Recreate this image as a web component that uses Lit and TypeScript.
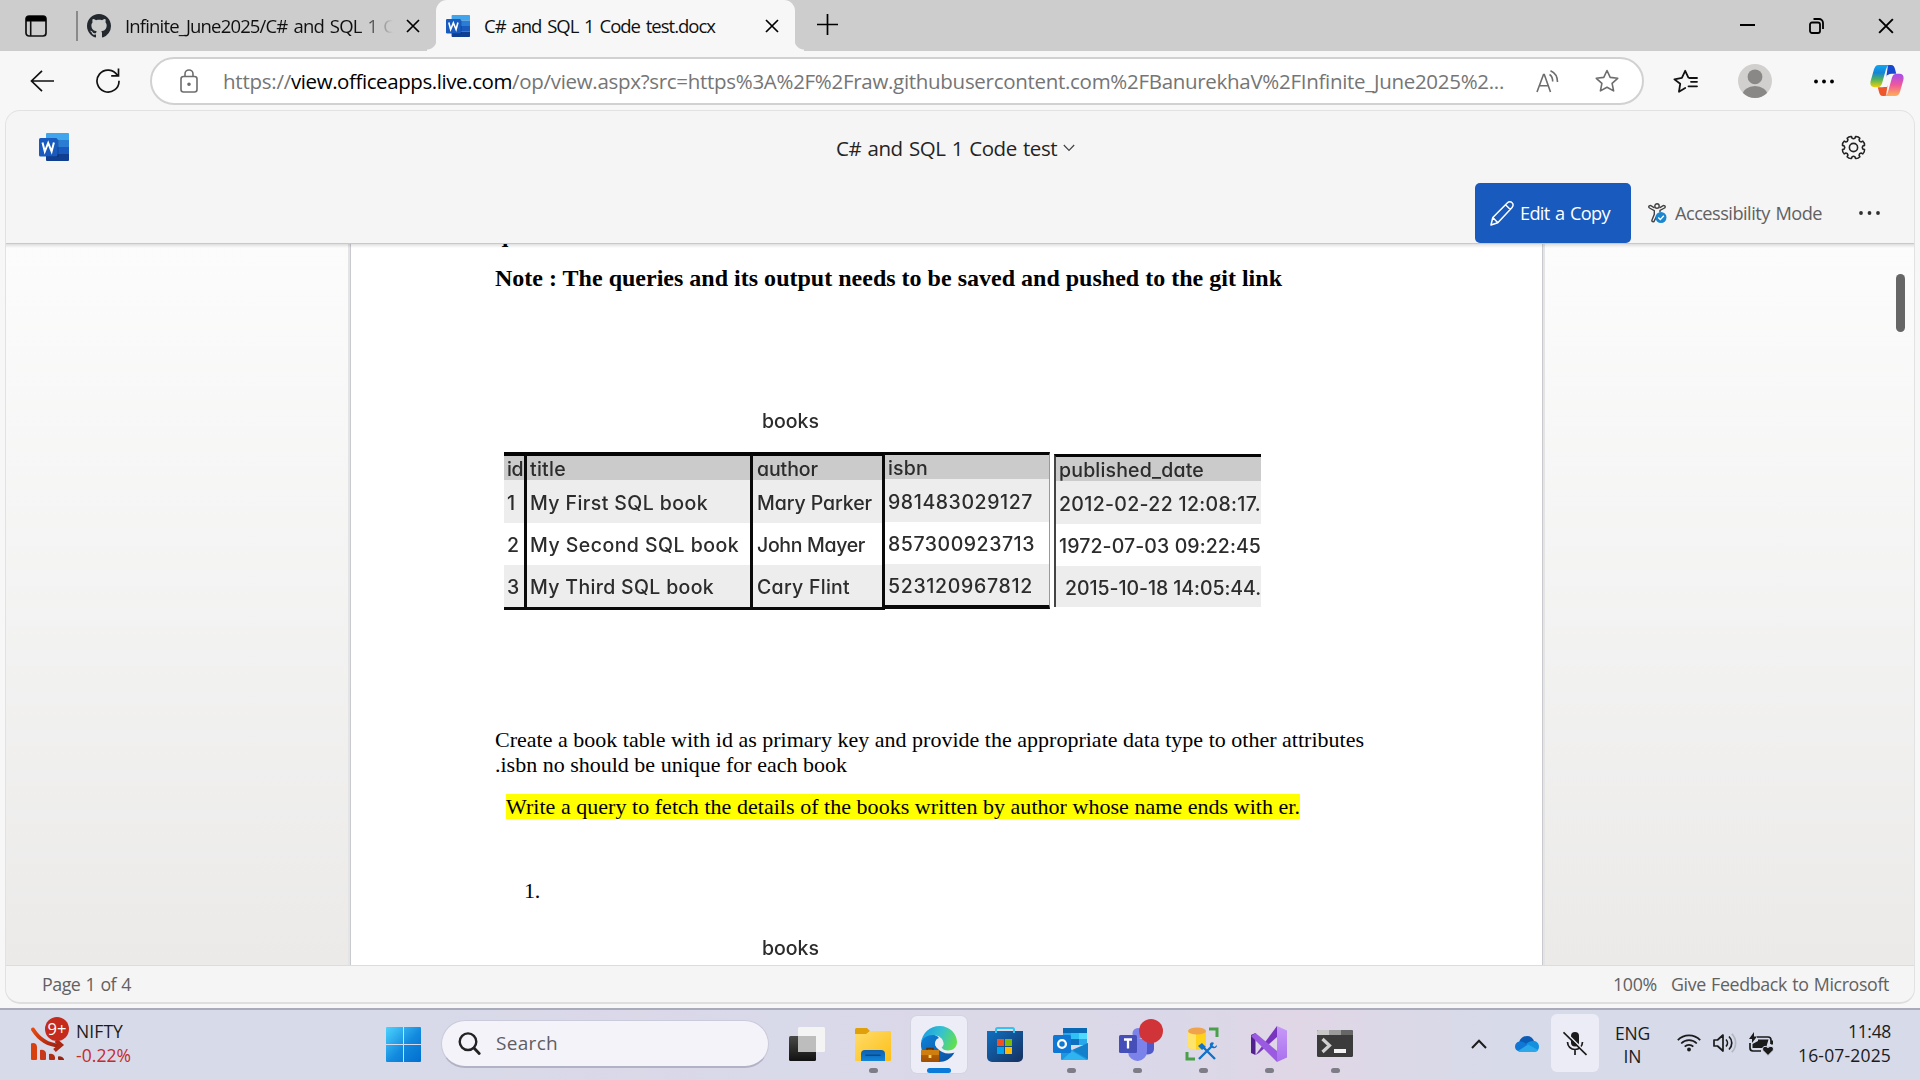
import { LitElement, html, css, svg } from "lit";
import { customElement, property } from "lit/decorators.js";

/** One line of text whose tracking is adjusted so that it spans a given width. */
@customElement("fit-line")
class FitLine extends LitElement {
  @property({ type: Number }) span = 0;
  @property() text = "";
  static styles = css`
    :host { display: block; white-space: pre; flex: none; }
    .run { display: inline-block; }
  `;
  render() {
    return html`<span class="run">${this.text}</span>`;
  }
  async firstUpdated() {
    await document.fonts.ready;
    const run = this.renderRoot.querySelector(".run") as HTMLElement;
    const natural = run.getBoundingClientRect().width;
    if (this.span && natural) {
      run.style.letterSpacing = (this.span - natural) / this.text.length + "px";
    }
  }
}

const line = (text: string, span: number, cls = "") =>
  html`<fit-line class=${cls} .text=${text} .span=${span}></fit-line>`;

const wordIcon = (w: number, h: number, cls: string) => html`
  <svg class=${cls} width=${w} height=${h} viewBox="0 0 30 28" preserveAspectRatio="none">
    <path d="M8 0h21a1 1 0 0 1 1 1v6H7V1a1 1 0 0 1 1-1z" fill="#41a5ee" />
    <path d="M7 7h23v7H7z" fill="#2b7cd3" />
    <path d="M7 14h23v7H7z" fill="#185abd" />
    <path d="M7 21h23v6a1 1 0 0 1-1 1H8a1 1 0 0 1-1-1z" fill="#103f91" />
    <path d="M7 6h11a1.500 1.500 0 0 1 1.500 1.500V24H7z" fill="#000" opacity=".22" />
    <rect x="0" y="5" width="18.500" height="18.500" rx="1.500" fill="#185abd" />
    <path d="M3.500 9.500l2.300 9L9.200 10l3.400 8.500 2.300-9" fill="none" stroke="#fff" stroke-width="2" />
  </svg>`;

const cross = (cls: string, s = 14) => html`
  <svg class=${cls} width=${s} height=${s} viewBox="0 0 14 14">
    <path d="M1 1l12 12M13 1L1 13" fill="none" stroke="#000" stroke-width="1.700" />
  </svg>`;

const starPath =
  "M12 1.500l3.200 6.900 7.500.9-5.600 5.100 1.500 7.500L12 18.200l-6.600 3.700 1.500-7.500L1.300 9.300l7.500-.9z";

@customElement("browser-tabs")
class BrowserTabs extends LitElement {
  static styles = css`
    :host { display: flex; height: 51px; background: #cdcdcd; font: 18.500px "Open Sans", sans-serif; word-spacing: 2px; color: #101010; }
    svg { display: block; flex: none; }
    .lead { display: flex; align-items: center; width: 436px; box-sizing: border-box; padding-left: 25px; }
    .rule { width: 2px; height: 30px; background: #8a8a8a; margin-left: 29px; }
    .git { margin-left: 9px; }
    .clip { width: 268px; overflow: hidden; margin-left: 14px; line-height: 50px;
      -webkit-mask-image: linear-gradient(90deg, #000 235px, transparent 268px); }
    .shut { margin-left: 13px; }
    .active { display: flex; align-items: center; width: 359px; background: #f7f7f7; border-radius: 11px 11px 0 0; line-height: 50px; }
    .wrap { display: flex; position: relative; }
    .flare { position: absolute; bottom: 0; width: 9px; height: 11px; }
    .l { left: -9px; background: radial-gradient(circle at 0 0, #cdcdcd 9px, #f7f7f7 10px); }
    .r { right: -9px; background: radial-gradient(circle at 100% 0, #cdcdcd 9px, #f7f7f7 10px); }
    .word { margin-left: 10px; }
    .name { margin-left: 14px; width: 281px; }
    .plus { margin: 14px 0 0 22px; }
    .controls { display: flex; margin-left: auto; align-items: center; gap: 54px; padding-right: 26px; }
  `;
  render() {
    return html`
      <div class="lead">
        <svg width="22" height="22" viewBox="0 0 22 22">
          <rect x="1" y="1" width="20" height="20" rx="3" fill="none" stroke="#111" stroke-width="1.700" />
          <path d="M1 6.500V4a3 3 0 0 1 3-3h14a3 3 0 0 1 3 3v2.500z" fill="#000" />
          <path d="M5.700 6v15" stroke="#111" stroke-width="1.600" />
        </svg>
        <span class="rule"></span>
        <svg class="git" width="24" height="24" viewBox="0 0 16 16">
          <path fill="#24292f" d="M8 0C3.580 0 0 3.580 0 8c0 3.540 2.290 6.530 5.470 7.590.4.070.55-.17.55-.38 0-.19-.01-.82-.01-1.490-2.010.37-2.530-.49-2.690-.94-.09-.23-.48-.94-.82-1.130-.28-.15-.68-.52-.01-.53.63-.01 1.080.58 1.230.82.72 1.210 1.870.87 2.330.66.07-.52.28-.87.51-1.070-1.780-.2-3.640-.89-3.640-3.950 0-.87.31-1.590.82-2.150-.08-.2-.36-1.020.08-2.120 0 0 .67-.21 2.200.82.64-.18 1.320-.27 2-.27s1.360.09 2 .27c1.530-1.040 2.200-.82 2.200-.82.44 1.100.16 1.920.08 2.120.51.56.82 1.270.82 2.150 0 3.070-1.870 3.750-3.650 3.950.29.25.54.73.54 1.480 0 1.070-.01 1.930-.01 2.200 0 .21.15.46.55.38A8.010 8.010 0 0 0 16 8c0-4.420-3.580-8-8-8z" />
        </svg>
        <div class="clip">${line("Infinite_June2025/C# and SQL 1 C", 269)}</div>
        ${cross("shut")}
      </div>
      <div class="wrap">
        <i class="flare l"></i><i class="flare r"></i>
        <div class="active">
          ${wordIcon(24, 22, "word")}
          <div class="name">${line("C# and SQL 1 Code test.docx", 231)}</div>
          ${cross("shut2")}
        </div>
      </div>
      <svg class="plus" width="21" height="21" viewBox="0 0 21 21">
        <path d="M10.500 0v21M0 10.500h21" stroke="#000" stroke-width="1.700" />
      </svg>
      <div class="controls">
        <svg width="15" height="15" viewBox="0 0 15 15"><path d="M0 7h15" stroke="#000" stroke-width="2" /></svg>
        <svg width="15" height="16" viewBox="0 0 15 16" fill="none" stroke="#000" stroke-width="1.800">
          <rect x="1" y="4.500" width="10" height="10.500" rx="2" />
          <path d="M4.500 1H10a4 4 0 0 1 4 4v6" />
        </svg>
        ${cross("x", 16)}
      </div>`;
  }
}

@customElement("address-bar")
class AddressBar extends LitElement {
  static styles = css`
    :host { display: flex; height: 59px; box-sizing: border-box; padding: 6px 14px 0 30px; background: #f7f7f7; align-items: flex-start; }
    svg { display: block; flex: none; }
    .back { margin-top: 13px; }
    .reload { margin: 11px 0 0 42px; }
    .pill { display: flex; box-sizing: border-box; align-items: center; width: 1494px; height: 48px; margin-left: 30px;
      border: 2px solid #d1d1d1; border-radius: 24px; background: #fff; padding-left: 28px;
      font: 20.500px/44px "Open Sans", sans-serif; color: #757575; }
    .url { display: flex; margin-left: 25px; width: 1313px; }
    .host { color: #000; }
    .star { margin-left: 36px; }
    .fav { margin: 12px 0 0 29px; }
    .avatar { margin: 7px 0 0 40px; }
    .dots { margin: 22px 0 0 42px; }
    .copilot { margin: 8px 0 0 36px; }
  `;
  render() {
    return html`
      <svg class="back" width="24" height="22" viewBox="0 0 24 22" fill="none" stroke="#111" stroke-width="1.700">
        <path d="M24 11H1.500M12 .8L1.500 11 12 21.200" />
      </svg>
      <svg class="reload" width="24" height="25" viewBox="0 0 24 25" fill="none" stroke="#111" stroke-width="1.700">
        <path d="M21.500 7.500A11 11 0 1 0 23 12.700M22.500 .5v7.300h-7.300" />
      </svg>
      <div class="pill">
        <svg width="18" height="24" viewBox="0 0 18 24" fill="none" stroke="#6d6d6d" stroke-width="1.600">
          <rect x="1" y="7.500" width="16" height="15.500" rx="2.500" />
          <path d="M5 7.500V5a4 4 0 0 1 8 0v2.500" /><circle cx="9" cy="15.200" r="1" fill="#6d6d6d" />
        </svg>
        <div class="url">
          ${line("https://", 68)}${line("view.officeapps.live.com", 221, "host")}${line("/op/view.aspx?src=https%3A%2F%2Fraw.githubusercontent.com%2FBanurekhaV%2FInfinite_June2025%2...", 992)}
        </div>
        <svg width="23" height="23" viewBox="0 0 23 23" fill="none" stroke="#6d6d6d" stroke-width="1.600">
          <path d="M1 22L7.500 4.500h.8L14.500 22M3.500 15.800h9" />
          <path d="M13.500 4.500c2 1.200 3.200 3.400 3.200 7M14.500.8c4.500 2 7 5.500 7 11.200" />
        </svg>
        <svg class="star" width="24" height="24" viewBox="0 0 24 24"><path d=${starPath} fill="none" stroke="#6d6d6d" stroke-width="1.600" stroke-linejoin="round" /></svg>
      </div>
      <svg class="fav" width="25" height="25" viewBox="0 0 25 25" fill="none" stroke="#111" stroke-width="1.800" stroke-linejoin="round" stroke-linecap="round">
        <path d="M12.500 19.500L6 22.800l1.100-8L1.300 10.300 8.800 8.800 12.200 1.800 15.400 8.600l2 .5M17 13h7M15.500 17.500H24" stroke="none" />
        <path d="M12.200 19L6 22.700l1.200-7.900L1.400 10.400 8.900 8.900 12.200 1.800l3.200 6.900 2.600.4M18 12.800h6M15.500 17.300H24M16.500 9h7.500" />
      </svg>
      <svg class="avatar" width="34" height="34" viewBox="0 0 34 34">
        <defs><clipPath id="face"><circle cx="17" cy="17" r="17" /></clipPath></defs>
        <g clip-path="url(#face)"><rect width="34" height="34" fill="#d2d0ce" />
          <circle cx="17" cy="12.800" r="7.400" fill="#8a8886" />
          <ellipse cx="17" cy="31" rx="12.500" ry="9" fill="#8a8886" /></g>
      </svg>
      <svg class="dots" width="20" height="5" viewBox="0 0 20 5"><circle cx="2" cy="2.500" r="1.900" /><circle cx="10" cy="2.500" r="1.900" /><circle cx="18" cy="2.500" r="1.900" /></svg>
      <svg class="copilot" width="34" height="31" viewBox="0 0 34 32" preserveAspectRatio="none">
        <defs>
          <linearGradient id="ca" x1="0" y1="0" x2="0" y2="1"><stop offset="0" stop-color="#0fa8f0" /><stop offset=".35" stop-color="#1584d8" /><stop offset=".65" stop-color="#52b35a" /><stop offset="1" stop-color="#f5cf0a" /></linearGradient>
          <linearGradient id="cb" x1="0" y1="0" x2="0" y2="1"><stop offset="0" stop-color="#a44df0" /><stop offset=".5" stop-color="#f0589c" /><stop offset="1" stop-color="#ffb152" /></linearGradient>
        </defs>
        <path d="M18 0h3c2.500 0 3.500 2 4.200 5l1 4h-4.500c-3 0-4.500 1.500-5.500 4z" fill="#1748d0" />
        <path d="M16 32h-3c-2.500 0-3.500-2-4.200-5l-1-4h4.500c3 0 4.500-1.500 5.500-4z" fill="#f0562c" />
        <path d="M8.500 0H20c-2 0-3.300 2-4 4.500L12 19c-.9 3-2.500 4-5 4H4.500C.5 23-.2 19.500.8 16L4 4.500C5 1.500 6.300 0 8.500 0z" fill="url(#ca)" />
        <path d="M25.500 32H14c2 0 3.300-2 4-4.500L22 13c.9-3 2.500-4 5-4h2.500c4 0 4.700 3.500 3.700 7L30 27.500c-1 3-2.300 4.500-4.500 4.500z" fill="url(#cb)" />
        <path d="M16.500 10.500h3.300c1 0 1.300.6 1 1.600L18 21c-.4 1.300-1 1.800-2 1.800h-3c1-1 1.500-2 2-3.800z" fill="#f7f7f7" />
      </svg>`;
  }
}

interface BookColumn { key: string; head: string; headSpan: number; rows: [string, number][]; }

const columns: BookColumn[] = [
  { key: "id", head: "id", headSpan: 16, rows: [["1", 0], ["2", 0], ["3", 0]] },
  { key: "title", head: "title", headSpan: 36, rows: [["My First SQL book", 178], ["My Second SQL book", 209], ["My Third SQL book", 184]] },
  { key: "author", head: "author", headSpan: 61, rows: [["Mary Parker", 115], ["John Mayer", 108], ["Cary Flint", 93]] },
  { key: "isbn", head: "isbn", headSpan: 40, rows: [["981483029127", 145], ["857300923713", 147], ["523120967812", 145]] },
  { key: "date", head: "published_date", headSpan: 145, rows: [["2012-02-22 12:08:17.", 202], ["1972-07-03 09:22:45", 202], ["2015-10-18 14:05:44.", 196]] },
];

@customElement("word-viewer")
class WordViewer extends LitElement {
  static styles = css`
    :host { display: flex; flex-direction: column; box-sizing: border-box; height: 894px; margin: 0 5px;
      border: 1px solid #e2e2e2; border-bottom: 2px solid #dedede; border-radius: 15px; overflow: hidden; background: #f5f5f5;
      font-family: "Open Sans", sans-serif; color: #242424; }
    svg { display: block; flex: none; }
    .top { display: flex; height: 72px; padding: 0 48px 0 33px; word-spacing: 1.500px; }
    .logo { margin-top: 22px; }
    .title { display: flex; margin-left: 767px; font-size: 20.500px; line-height: 74px; }
    .chev { margin: 33px 0 0 6px; }
    .gear { margin: 23.500px 0 0 auto; }
    .tools { display: flex; height: 60px; justify-content: flex-end; align-items: center; padding-right: 33px; font-size: 18.200px; line-height: 61px; word-spacing: 1.500px; color: #616161; }
    .edit { display: flex; align-items: center; box-sizing: border-box; width: 156px; height: 60px; padding-left: 15px; gap: 6px; border-radius: 5px; background: #185abd; color: #fff; }
    .acc { display: flex; align-items: center; gap: 8px; margin-left: 17px; width: 211px; }
    .canvas { position: relative; flex: 1; overflow: hidden; border-top: 1px solid #c9c9c9; background: linear-gradient(#fcfcfc, #ebeae9); display: flex; }
    .canvas::before { content: ""; position: absolute; left: 0; right: 0; top: 0; height: 4px; background: linear-gradient(rgba(0,0,0,.12), transparent); }
    .page { display: flex; flex-direction: column; box-sizing: border-box; width: 1193px; height: 721px; margin-left: 344px; padding-left: 144px;
      background: #fff; border: solid #c9cad0; border-width: 0 1px; box-shadow: 0 0 0 2px #e4e4e4; font-family: "Liberation Serif", serif; color: #000; }
    .bold { font-weight: bold; font-size: 24px; line-height: 28px; }
    .cut { margin-top: -24px; }
    .note { margin-top: 16px; }
    .books { font-family: Inter, sans-serif; font-weight: 500; font-size: 19.500px; line-height: 24px; color: #2c2c2c;
      font-feature-settings: "cv11", "ss03"; filter: blur(.35px); }
    .caption { margin: 117px 0 0 267px; }
    .table { display: flex; align-items: flex-start; margin: 19px 0 0 9px; height: 160px; }
    .col { border-top: 4px solid #050505; overflow: hidden; box-sizing: border-box; }
    .head { height: 24px; line-height: 26px; background: #cbcbcb; box-sizing: border-box; }
    .cell { height: 42px; line-height: 45px; background: #ededed; box-sizing: border-box; }
    .cell:nth-child(2) { height: 43px; line-height: 46px; }
    .cell:nth-child(3) { background: #fff; }
    .id, .title-col, .author { border-bottom: 3px solid #0a0a0a; border-right: 3px solid #0a0a0a; }
    .id { width: 23px; } .id > * { padding-left: 3px; }
    .title-col { width: 226px; } .title-col > * { padding-left: 3px; }
    .author { width: 132px; } .author > * { padding-left: 4px; }
    .isbn { width: 165px; border-top-width: 3px; border-right: 1px solid #999; border-bottom: 4px solid #0a0a0a; }
    .isbn > * { padding-left: 3px; }
    .isbn .cell:nth-child(4) { height: 41px; }
    .date { width: 207px; margin: 2px 0 0 4px; border-top-width: 3px; border-left: 2px solid #444; }
    .date > * { padding-left: 3px; }
    .date .cell:nth-child(4) { padding-left: 9px; height: 41px; }
    .para { font-size: 22px; line-height: 25px; }
    .first { margin-top: 115px; }
    .mark { background: #ff0; margin: 17px 0 0 11px; align-self: flex-start; width: 794px; line-height: 25px; height: 25px; }
    .num { margin: 59px 0 0 29px; }
    .second { margin: 33px 0 0 267px; }
    .thumb { width: 9px; height: 58px; margin: 30px 0 0 353px; border-radius: 5px; background: #666; flex: none; }
    .status { display: flex; height: 36px; border-top: 1px solid #dcdcdc; padding: 0 25px 0 36px; font-size: 17.800px; line-height: 36px; word-spacing: 1px; color: #616161; }
    .zoom { margin-left: auto; margin-right: 14px; }
  `;
  render() {
    return html`
      <div class="top">
        ${wordIcon(30, 28, "logo")}
        <div class="title">${line("C# and SQL 1 Code test", 221)}
          <svg class="chev" width="12" height="8" viewBox="0 0 12 8"><path d="M.8 1L6 6.500 11.200 1" fill="none" stroke="#424242" stroke-width="1.200" /></svg>
        </div>
        <svg class="gear" width="25" height="25" viewBox="-12.500 -12.500 25 25" fill="none" stroke="#242424" stroke-width="1.600" stroke-linejoin="round">
          <circle r="4.100" />
          ${svg`<path d=${gearPath()} />`}
        </svg>
      </div>
      <div class="tools">
        <div class="edit">
          <svg width="24" height="25" viewBox="0 0 24 25" fill="none" stroke="#fff" stroke-width="1.500" stroke-linejoin="round">
            <path d="M1 24l1.800-7.500L17.500 1.800a3.200 3.200 0 0 1 4.600 0a3.200 3.200 0 0 1 0 4.600L7.800 21.800zM15.500 3.800l4.800 4.700M2.800 16.500l5 5.300" />
          </svg>
          ${line("Edit a Copy", 90)}
        </div>
        <div class="acc">
          <svg width="19" height="20" viewBox="0 0 19 20" fill="none" stroke="#424242" stroke-width="1.400">
            <circle cx="9" cy="3" r="2.200" />
            <path d="M6.500 4.800L2.800 2.700A1.300 1.300 0 0 0 1.500 5l4.800 2.700v3.600L4 17a1.200 1.200 0 0 0 2.300.9L9 12.500M11.500 4.800l3.700-2.100A1.300 1.300 0 0 1 16.500 5l-4.500 2.500v2" />
            <circle cx="13" cy="14.500" r="5.500" fill="#1a86d0" stroke="none" /><path d="M10.300 14.600l2 2 3.500-3.800" stroke="#fff" />
          </svg>
          ${line("Accessibility Mode", 147)}
        </div>
        <svg width="22" height="5" viewBox="0 0 22 5" fill="#303030"><circle cx="2" cy="2" r="1.900" /><circle cx="10.500" cy="2" r="1.900" /><circle cx="19" cy="2" r="1.900" /></svg>
      </div>
      <div class="canvas">
        <div class="page">
          ${line("queries.", 78, "bold cut")}
          ${line("Note : The queries and its output needs to be saved and pushed to the git link", 787, "bold note")}
          <div class="books caption">${line("books", 57)}</div>
          <div class="books table">${columns.map((c) => html`
            <div class="col ${c.key === "title" ? "title-col" : c.key}">
              <div class="head">${line(c.head, c.headSpan)}</div>
              ${c.rows.map(([t, w]) => html`<div class="cell">${line(t, w)}</div>`)}
            </div>`)}
          </div>
          ${line("Create a book table with id as primary key and provide the appropriate data type to other attributes", 869, "para first")}
          ${line(".isbn no should be unique for each book", 352, "para")}
          ${line("Write a query to fetch the details of the books written by author whose name ends with er.", 794, "para mark")}
          ${line("1.", 16, "para num")}
          <div class="books second">${line("books", 57)}</div>
        </div>
        <div class="thumb"></div>
      </div>
      <div class="status">
        ${line("Page 1 of 4", 89)}${line("100%", 44, "zoom")}${line("Give Feedback to Microsoft", 218)}
      </div>`;
  }
}

/** Outline of an eight-toothed gear centred on the origin, with a notch at the top. */
function gearPath(): string {
  const at = (a: number, r: number) => `${(r * Math.sin(a)).toFixed(2)} ${(-r * Math.cos(a)).toFixed(2)}`;
  let d = "";
  for (let i = 0; i < 8; i++) {
    const a = ((i + 0.5) * Math.PI) / 4;
    d += `${i ? "L" : "M"}${at(a - 0.24, 9.4)}L${at(a - 0.21, 11.2)}Q${at(a, 12.2)} ${at(a + 0.21, 11.2)}L${at(a + 0.24, 9.4)}Q${at(a + 0.39, 8.2)} ${at(a + 0.545, 9.4)}`;
  }
  return d + "Z";
}

@customElement("task-bar")
class TaskBar extends LitElement {
  static styles = css`
    :host { display: flex; box-sizing: border-box; height: 72px; border-top: 2px solid #a9abbb; padding-left: 30px;
      background: linear-gradient(90deg, #d7dae9 0, #d7dae9 380px, #dbd8e8 640px, #d8d9e9 780px, #dcd8e8 1000px, #dad8e8 1180px, #e0d6e6 1300px, #dad9e8 1420px, #d7dae9 1500px);
      font-family: "Open Sans", sans-serif; font-size: 17.500px; line-height: 24px; color: #1b1b1b; }
    svg { display: block; flex: none; }
    .widget { position: relative; margin-top: 15px; }
    .badge { position: absolute; left: 15px; top: -8px; width: 24px; height: 24px; border-radius: 50%; background: #c42b1c; color: #fff; font-size: 16.500px; line-height: 24px; text-align: center; }
    .stock { margin: 9px 0 0 10px; width: 310px; }
    .fall { color: #c42b2b; }
    .start { margin-top: 17px; }
    .search { display: flex; align-items: center; box-sizing: border-box; width: 328px; height: 48px; margin: 10px 10px 0 20px; padding-left: 16px; gap: 15px; border-radius: 24px;
      border: 1.500px solid #c9cbdb; border-bottom: 2px solid #b1b2c3; background: #f3f3f9; font-size: 19px; line-height: 45px; color: #5d5d64; }
    .apps { display: flex; gap: 10px; margin-top: 6px; }
    .app { display: flex; flex-direction: column; align-items: center; box-sizing: border-box; width: 56px; height: 57px; padding-top: 10px; border-radius: 6px; }
    .on { background: #ecedf6; box-shadow: 0 0 0 1px #d3d4e2; }
    .dot { width: 9px; height: 5px; border-radius: 3px; background: #7d7c87; margin-top: 6px; }
    .on .dot { width: 24px; background: #0a7bd8; }
    .tray { display: flex; margin-left: auto; padding-right: 29px; }
    .up { margin-top: 29px; } .cloud { margin: 26px 0 0 28px; }
    .mic { display: flex; align-items: center; justify-content: center; width: 48px; height: 58px; margin: 4px 0 0 12px; border-radius: 6px; background: #ebecf5; }
    .lang { display: flex; flex-direction: column; align-items: center; width: 35px; margin: 12px 0 0 16px; line-height: 23px; }
    .wifi { margin: 23px 0 0 27px; } .vol { margin: 22px 0 0 12px; } .batt { margin: 22px 0 0 12px; }
    .clock { display: flex; flex-direction: column; align-items: flex-end; width: 93px; margin: 9px 0 0 24px; }
  `;
  private icons = [
    html`<svg width="36" height="36" viewBox="0 0 36 36">
      <defs><linearGradient id="tv" x1="0" y1="0" x2="0" y2="1"><stop stop-color="#4a4a48" /><stop offset="1" stop-color="#111" /></linearGradient></defs>
      <rect y="10" width="27" height="25" rx="1.500" fill="url(#tv)" /><rect x="9" y="1" width="27" height="25" rx="1.500" fill="#f4f4f4" /><path d="M9 10h18v16H9z" fill="#bdbdbd" /></svg>`,
    html`<svg width="36" height="36" viewBox="0 0 36 36">
      <defs><linearGradient id="fo" x1="0" y1="0" x2="1" y2="1"><stop stop-color="#ffdc6b" /><stop offset="1" stop-color="#fcbf17" /></linearGradient><linearGradient id="fb" x1="0" y1="0" x2="0" y2="1"><stop stop-color="#0d5fb0" /><stop offset="1" stop-color="#1384d8" /></linearGradient></defs>
      <path d="M0 3.500A1.500 1.500 0 0 1 1.500 2H12l3 3-4 4H0z" fill="#dfa00b" /><path d="M0 8h11l4-3h20a1 1 0 0 1 1 1v28a1 1 0 0 1-1 1H1a1 1 0 0 1-1-1z" fill="url(#fo)" />
      <path d="M6 35v-7a4 4 0 0 1 4-4h16a4 4 0 0 1 4 4v7z" fill="url(#fb)" /><path d="M11 29.200h14" stroke="#0b4a86" stroke-width="1.600" stroke-linecap="round" /></svg>`,
    html`<svg width="36" height="36" viewBox="0 0 36 36">
      <defs><linearGradient id="eg" x1="0" y1=".3" x2="1" y2=".6"><stop stop-color="#1b9de0" /><stop offset=".5" stop-color="#35c1d0" /><stop offset="1" stop-color="#62e04e" /></linearGradient><linearGradient id="eb" x1="0" y1="0" x2="1" y2="1"><stop stop-color="#0f83d8" /><stop offset="1" stop-color="#0b4fa0" /></linearGradient><linearGradient id="bc" x1="0" y1="0" x2="0" y2="1"><stop stop-color="#c06a08" /><stop offset="1" stop-color="#a04f04" /></linearGradient></defs>
      <path d="M0 17C2 7 13 6 18 12c-4 1-5 6-2 10 4 5 11 7 17.500 4.500C30 33 24 36 18 36 7 36-1 27 0 17z" fill="url(#eb)" />
      <path d="M0 17C1 7 9 0 18.500 0 29 0 36 8 36 16c0 5-4 8.500-9 8.500-4 0-6.500-1-6.500-2.500s2-1.500 2-4.500c0-5-5-8.500-10.500-8.500C6 9 1.500 12 0 17z" fill="url(#eg)" />
      <circle cx="18.200" cy="18" r="4.200" fill="#ecedf6" /><path d="M15 20c3 5 11 7.500 18.500 6.300l1-2.300c-4 1.800-11 1.500-13.500-2z" fill="#ecedf6" />
      <path d="M6 24v-1.500h6V24" fill="none" stroke="#5f3204" stroke-width="1.600" /><rect y="24" width="18" height="12" rx="1" fill="url(#bc)" /><path d="M0 24h18v5H0z" fill="#d98a12" opacity=".7" /><rect x="7.600" y="29" width="2.800" height="3" fill="#ffd75e" /></svg>`,
    html`<svg width="36" height="36" viewBox="0 0 36 36">
      <defs><linearGradient id="st" x1="0" y1="0" x2="1" y2="1"><stop stop-color="#0f70c2" /><stop offset="1" stop-color="#16305e" /></linearGradient></defs>
      <path d="M9 8V3.500A1.500 1.500 0 0 1 10.500 2h15A1.500 1.500 0 0 1 27 3.500V8" fill="none" stroke="#35c1f1" stroke-width="2" /><path d="M0 5h36v26a5 5 0 0 1-5 5H5a5 5 0 0 1-5-5z" fill="url(#st)" /><path d="M9 7V5M27 7V5" stroke="#35c1f1" stroke-width="2" />
      <path d="M10 13h7v7h-7z" fill="#f25022" /><path d="M18 13h7v7h-7z" fill="#7fba00" /><path d="M10 21h7v7h-7z" fill="#00a4ef" /><path d="M18 21h7v7h-7z" fill="#ffb900" /></svg>`,
    html`<svg width="36" height="36" viewBox="0 0 36 36">
      <path d="M10 2h23a1 1 0 0 1 1 1v14H10z" fill="#28a8ea" /><path d="M10 2h24v5H10z" fill="#0868b4" /><path d="M18 7h8v6h-8z" fill="#2fc0f5" /><path d="M26 7h8v6h-8z" fill="#50d9ff" /><path d="M18 13h8v6h-8z" fill="#0f70c0" /><path d="M26 13h8v6h-8z" fill="#28a8ea" />
      <path d="M8 18l13 7 14-8v16a1 1 0 0 1-1 1H9a1 1 0 0 1-1-1z" fill="#1a98e0" /><path d="M35 17v16L19 24z" fill="#1380cc" /><path d="M9 34h25L19 25z" fill="#2fb4f0" />
      <rect y="9" width="18" height="18" rx="1.500" fill="#0f78d4" /><circle cx="9" cy="18" r="3.900" fill="none" stroke="#fff" stroke-width="2.300" /></svg>`,
    html`<svg width="36" height="36" viewBox="0 0 36 36" overflow="visible">
      <path d="M22 13h13v10a6 6 0 0 1-10 4z" fill="#5059c9" /><circle cx="19" cy="7.500" r="5.500" fill="#7b83eb" /><path d="M9 13h19v12a9.500 9.500 0 0 1-19 1z" fill="#7b83eb" />
      <rect y="9" width="18" height="18" rx="1.500" fill="#464eb8" /><path d="M5 13.500h8M9 13.500v9" stroke="#fff" stroke-width="2.300" /><circle cx="32" cy="5" r="12" fill="#d13438" /></svg>`,
    html`<svg width="36" height="36" viewBox="0 0 36 36">
      <path d="M3 5v15c0 5 18 5 18 0V5z" fill="#ffd21c" /><path d="M3 5v15c0 2.500 4 3.700 8 3.800V5z" fill="#ffe36a" /><ellipse cx="12" cy="5" rx="9" ry="3.600" fill="#f0a34a" />
      <path d="M24 3h8v8M2 26v7h8" fill="none" stroke="#4aa04a" stroke-width="3" />
      <path d="M15 33l12-12M16 19l13 14" stroke="#dcdaea" stroke-width="5" /><path d="M14 33l13-13M17 20l13 13" stroke="#1272c8" stroke-width="2.400" /><path d="M13 20l4-3 4 4-4 3zM25 20c-1-3 2-5 4-3l-1.500 2.500 2 1.500L32 19c0 4-4 4-6 2z" fill="#1272c8" /></svg>`,
    html`<svg width="36" height="36" viewBox="0 0 36 36">
      <defs><linearGradient id="vr" x1="0" y1="0" x2="0" y2="1"><stop stop-color="#c79af8" /><stop offset="1" stop-color="#a970ee" /></linearGradient></defs>
      <path d="M0 9l4.500-2v22L0 27z" fill="#52218f" /><path d="M4.500 29L26 0v11L8 27z" fill="#7a35c0" /><path d="M4.500 7L26 25v11L0 10z" fill="#9a5be0" /><path d="M26 0l10 4.500v27L26 36z" fill="url(#vr)" /></svg>`,
    html`<svg width="36" height="36" viewBox="0 0 36 36">
      <rect y="4" width="36" height="27" rx="1.500" fill="#3b3b3b" /><path d="M0 9V5.500A1.500 1.500 0 0 1 1.500 4H12v5z" fill="#c7c7c7" /><path d="M12 4h12v5H12z" fill="#9b9b9b" /><path d="M24 4h10.500A1.500 1.500 0 0 1 36 5.500V9H24z" fill="#666" />
      <path d="M5.500 13l7 6.500-7 6.500" fill="none" stroke="#d0d0d0" stroke-width="3.200" /><path d="M17 23h12v4H17z" fill="#f2f2f2" /></svg>`,
  ];
  render() {
    return html`
      <div class="widget">
        <svg width="36" height="36" viewBox="0 0 36 36">
          <defs><linearGradient id="nf" x1="0" y1="0" x2="1" y2="1"><stop stop-color="#e84a10" /><stop offset="1" stop-color="#a02010" /></linearGradient></defs>
          <path d="M3 4.500C9 14 18 20 29 20.500" fill="none" stroke="url(#nf)" stroke-width="4" stroke-linecap="round" />
          <path d="M26 15.500l5 4.500-6.500 5.500" fill="none" stroke="#a82814" stroke-width="4" />
          <path d="M1 18.500a4 4 0 0 1 6 3V34a1 1 0 0 1-1 1H2a1 1 0 0 1-1-1z" fill="#d8400e" /><path d="M10 25a5 5 0 0 1 6 3v6a1 1 0 0 1-1 1h-4a1 1 0 0 1-1-1z" fill="#c8381a" /><path d="M19 29a5 5 0 0 1 6 3v2a1 1 0 0 1-1 1h-4a1 1 0 0 1-1-1z" fill="#b02c14" /><path d="M28 31.500a5 5 0 0 1 6 2.500v1h-5a1 1 0 0 1-1-1z" fill="#982410" />
        </svg>
        <span class="badge">9+</span>
      </div>
      <div class="stock">${line("NIFTY", 47)}${line("-0.22%", 55, "fall")}</div>
      <svg class="start" width="35" height="35" viewBox="0 0 35 35">
        <defs><linearGradient id="wn" x1="0" y1="0" x2="35" y2="35" gradientUnits="userSpaceOnUse"><stop stop-color="#4cd3ff" /><stop offset=".55" stop-color="#1289de" /><stop offset="1" stop-color="#006fcf" /></linearGradient></defs>
        <path d="M1 0h16v17H0V1a1 1 0 0 1 1-1zM18 0h16a1 1 0 0 1 1 1v16H18zM0 18h17v17H1a1 1 0 0 1-1-1zM18 18h17v16a1 1 0 0 1-1 1H18z" fill="url(#wn)" />
      </svg>
      <div class="search">
        <svg width="23" height="23" viewBox="0 0 23 23" fill="none" stroke="#222" stroke-width="2.400" stroke-linecap="round"><circle cx="10" cy="9.700" r="8.300" /><path d="M16 16l5.200 5.500" stroke-width="2.800" /></svg>
        ${line("Search", 62)}
      </div>
      <div class="apps">${this.icons.map((icon, i) => html`
        <div class="app ${i === 2 ? "on" : ""}">${icon}${i === 0 || i === 3 ? "" : html`<span class="dot"></span>`}</div>`)}
      </div>
      <div class="tray">
        <svg class="up" width="16" height="10" viewBox="0 0 16 10"><path d="M1 9l7-7.300L15 9" fill="none" stroke="#1b1b1b" stroke-width="2" /></svg>
        <svg class="cloud" width="24" height="16" viewBox="0 0 24 16">
          <path d="M4 8C4 3 8 0 12 0c3.500 0 6 2 7 5l-6 5z" fill="#0a5cb5" /><path d="M4.500 5.500c3-.5 5 1 9 4L6 15C2 16 0 13 0 10.500s1.800-4.800 4.500-5z" fill="#1078d4" /><path d="M18 5c3.500-.4 6 2.500 6 5.500 0 2.500-1 4-3 5L11 8c2-2 4.500-3 7-3z" fill="#1490df" /><path d="M3 15l10-6.500 10 5.500c-1 1.500-2 2-4 2H5c-1 0-1.500-.5-2-1z" fill="#2aa8ea" />
        </svg>
        <div class="mic"><svg width="24" height="25" viewBox="0 0 24 25" fill="none" stroke="#1b1b1b" stroke-width="1.700">
          <rect x="8" y="1" width="8" height="14.500" rx="4" fill="#1b1b1b" stroke="none" /><path d="M4.500 11a7.500 7.500 0 0 0 15 0M12 18.500V24" /><path d="M1.500 0.200L24 22.700" stroke="#ebecf5" /><path d="M.5 1.300L23.500 24" /></svg></div>
        <div class="lang">${line("ENG", 35)}${line("IN", 18)}</div>
        <svg class="wifi" width="24" height="19" viewBox="0 0 24 19" fill="none" stroke="#1b1b1b" stroke-width="1.700"><path d="M.8 7.200a15.500 15.500 0 0 1 22.400 0M4.200 10.500a10.800 10.800 0 0 1 15.600 0M7.700 13.700a6 6 0 0 1 8.600 0" /><circle cx="12" cy="16.500" r="1.900" fill="#1b1b1b" stroke="none" /></svg>
        <svg class="vol" width="24" height="22" viewBox="0 0 24 22" fill="none" stroke="#1b1b1b" stroke-width="1.700" stroke-linejoin="round"><path d="M1 8v6h3.500L10 19V3L4.500 8zM13 7.500a5 5 0 0 1 0 7M16 4.500a9 9 0 0 1 0 13" /><path d="M18.800 1.800a13 13 0 0 1 0 18.400" stroke="#b5b6c4" /></svg>
        <svg class="batt" width="25" height="24" viewBox="0 0 25 24"><path d="M8 5h11a3 3 0 0 1 3 3v4M1 11v5a3 3 0 0 0 3 3h8" fill="none" stroke="#1b1b1b" stroke-width="1.700" /><path d="M9 7.500h10.500L17 16H3.500V12L9 9z" fill="#1b1b1b" /><path d="M22 8.500h2v4h-2z" fill="#1b1b1b" /><path d="M5 0L0 7h3v4l5-6.500H5z" fill="#1b1b1b" /><path d="M19 23.500l-5-5c-2-4 3-5.500 5-2.700 2-2.800 7-1.300 5 2.700z" fill="#1b1b1b" stroke="#d7dae9" /></svg>
        <div class="clock">${line("11:48", 43)}${line("16-07-2025", 93)}</div>
      </div>`;
  }
}

@customElement("app-root")
class AppRoot extends LitElement {
  static styles = css`
    :host { display: flex; flex-direction: column; width: 1920px; height: 1080px; overflow: hidden; background: #f7f7f7; }
    browser-tabs, address-bar, word-viewer, task-bar { flex: none; }
    task-bar { margin-top: 4px; }
  `;
  render() {
    return html`<browser-tabs></browser-tabs><address-bar></address-bar><word-viewer></word-viewer><task-bar></task-bar>`;
  }
}
